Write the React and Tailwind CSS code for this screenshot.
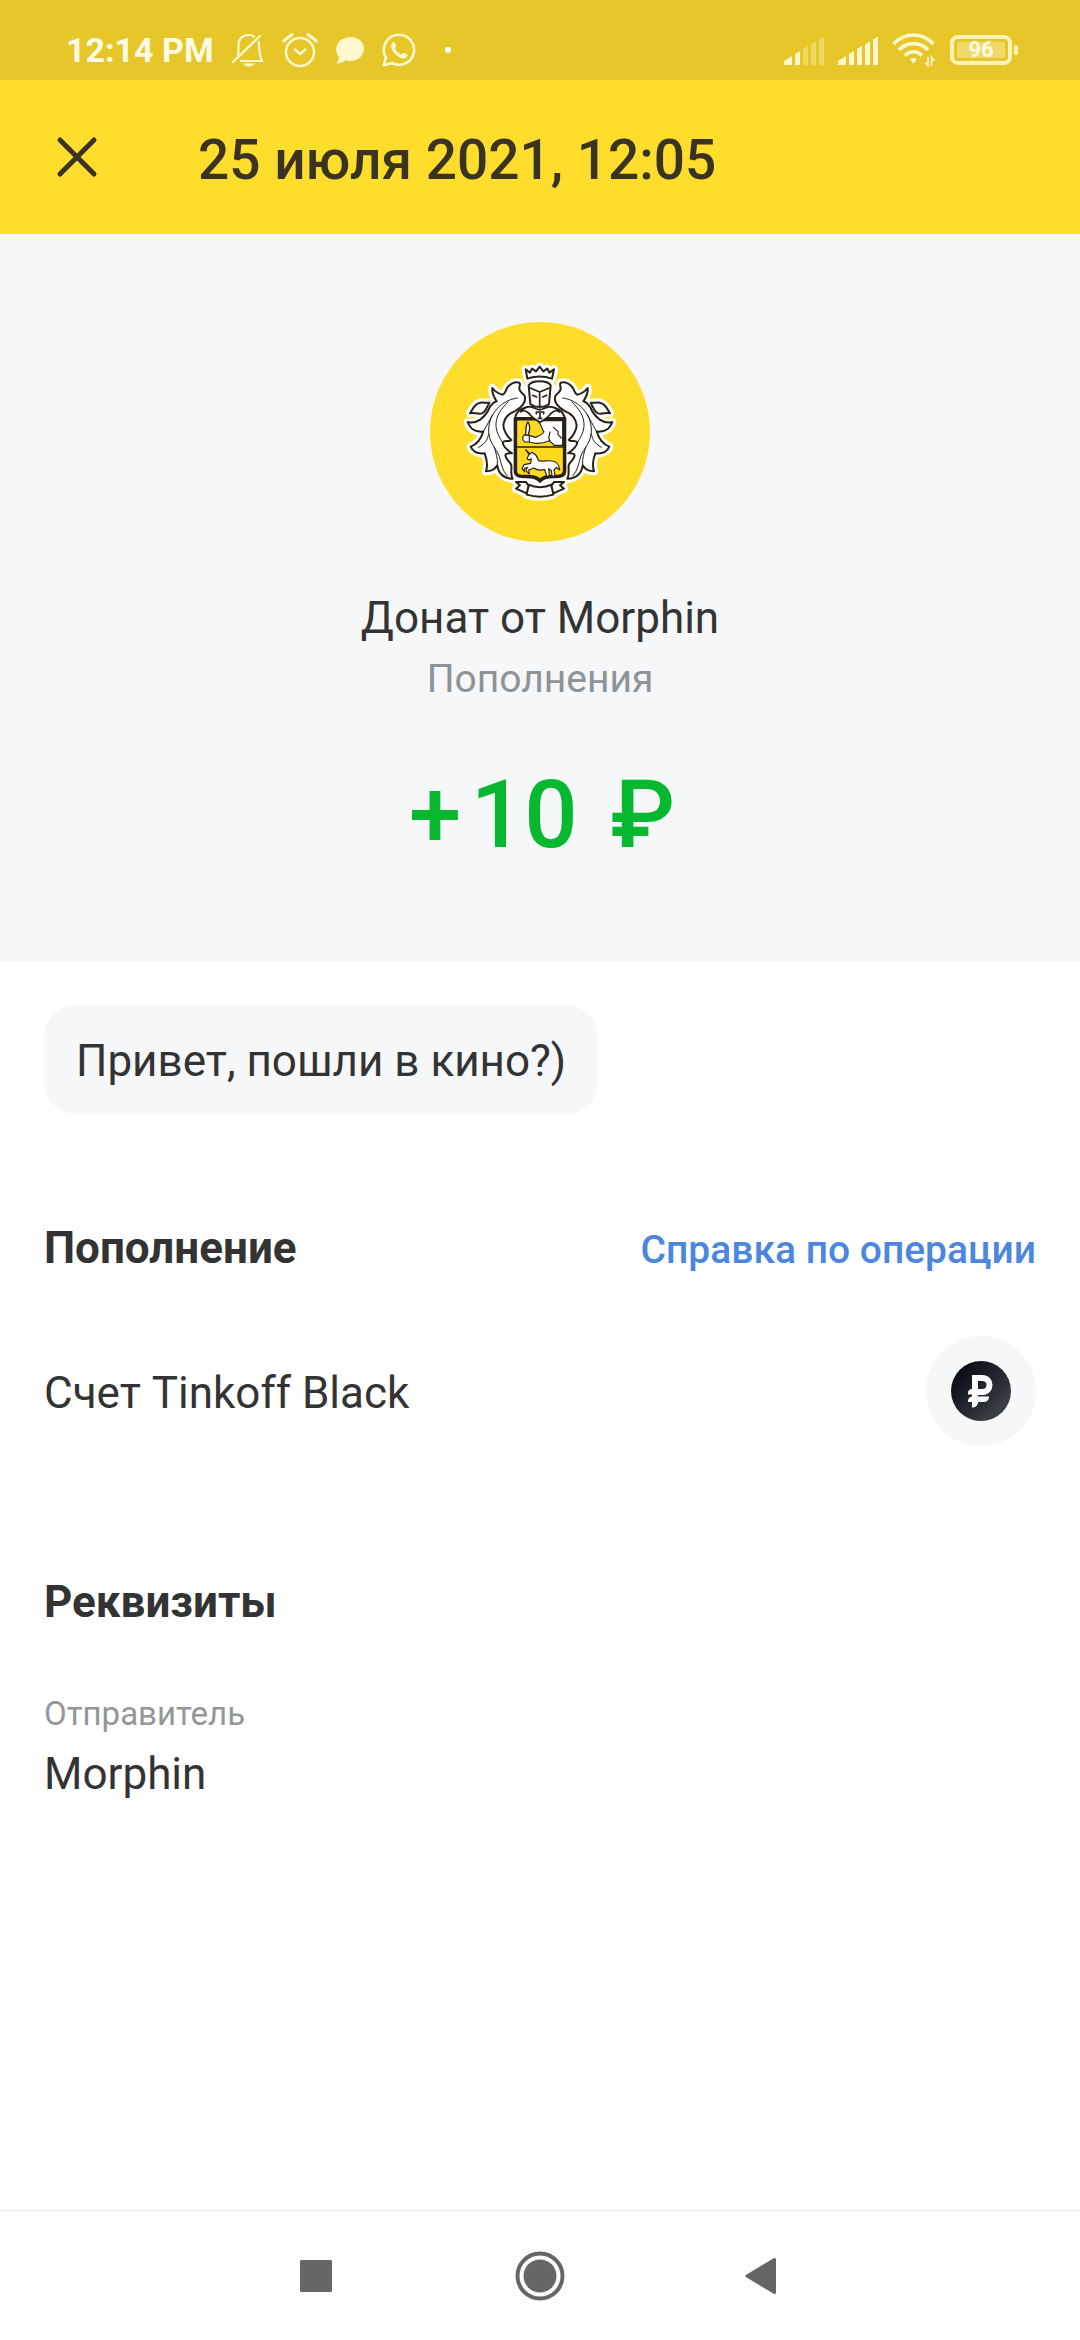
import React from "react";

const CREAM = "#fff8cf";

function BellOff() {
  return (
    <svg viewBox="0 0 34 36" className="h-9 w-[34px]" fill="none" stroke={CREAM} strokeWidth="2.200" strokeLinecap="round">
      <path d="M7 23 C8.500 18 5.500 11 10 6 C13 2.800 19 2 23 4.500 M27.500 10 C28.500 15 27.500 21 31 29 H10" />
      <path d="M2 30 L29 4" />
      <path d="M12.500 31.500 H23.500 C22 35.500 14 35.500 12.500 31.500 Z" fill={CREAM} stroke="none" />
    </svg>
  );
}

function Alarm() {
  return (
    <svg viewBox="0 0 36 36" className="size-9" fill="none" stroke={CREAM} strokeWidth="2.400" strokeLinecap="round" strokeLinejoin="round">
      <circle cx="18" cy="20" r="14" />
      <path d="M1.800 9 L10 2.500 M34.200 9 L26 2.500" strokeWidth="3" />
      <path d="M13 17.500 L18 22 L23.500 17.500" />
    </svg>
  );
}

function Chat() {
  return (
    <svg viewBox="0 0 30 28" className="h-7 w-[30px]" fill={CREAM}>
      <path d="M15.500 1 C23 1 29 6 29 12.500 C29 19.500 23 25 15.500 25 C13.500 25 12 24.800 10.500 24.200 C8 26.500 5 27.500 1.500 27.500 C3 25.500 4 23 3.800 20.800 C2 18.500 1 15.500 1.200 12.500 C1.500 6 8 1 15.500 1 Z" />
    </svg>
  );
}

function Phone() {
  return (
    <svg viewBox="0 0 34 34" className="size-[34px]" fill="none" stroke={CREAM} strokeWidth="2.600" strokeLinejoin="round">
      <path d="M17.500 1.800 A15 15 0 1 1 10 30 L1.800 32.200 L4 24.500 A15 15 0 0 1 17.500 1.800 Z" />
      <path d="M12 9 C13 9 13.500 11 14.300 12.800 C14.500 14 12.800 14.800 13 15.500 C14 18 16.500 20.500 19 21.500 C20 21.800 20.800 19.600 22 19.800 L25.500 21.500 C26 23.500 24 25.500 21.500 25.500 C16 25.500 10 19 9.200 13.800 C9 11 10.500 9 12 9 Z" fill={CREAM} stroke="none" />
    </svg>
  );
}

function Signal({ level }) {
  const bars = [
    "M0 30 V26 L8 21 V30 Z",
    "M11 19 L16 16 V30 H11 Z",
    "M19 14 L24 11 V30 H19 Z",
    "M27 9.500 L32 6.500 V30 H27 Z",
    "M35 4.500 L40 1.500 V30 H35 Z",
  ];
  return (
    <svg viewBox="0 0 40 30" className="h-[30px] w-10" fill={CREAM}>
      {bars.map((d, i) => (
        <path key={d} d={d} opacity={i < level ? 1 : 0.35} />
      ))}
    </svg>
  );
}

function Wifi() {
  return (
    <svg viewBox="0 0 44 34" className="h-[34px] w-11" fill="none" stroke={CREAM} strokeWidth="3.600">
      <path d="M1.500 11 C13 -1 30 -1 41.500 11" />
      <path d="M7 17 C15 8.500 28 8.500 36 17" />
      <path d="M13 22.500 C18 17.500 25 17.500 30 22.500" />
      <path d="M18 26.500 C19.500 24.500 23.500 24.500 25 26.500 L21.500 30.500 Z" fill={CREAM} stroke="none" />
      <path d="M36 24 V33 L33 29.500 M39.500 33 V24 L42.500 28" strokeWidth="1.600" />
    </svg>
  );
}

function Battery() {
  return (
    <div className="flex items-center gap-0.5">
      <div className="flex h-[30px] w-[62px] rounded-lg border-4 border-[#fdf3b8] p-[3px]">
        <span className="flex flex-1 items-center justify-center bg-[#efd968] text-[22px] leading-4 font-bold text-[#fffbe6]">96</span>
      </div>
      <div className="h-2.5 w-1 rounded-sm bg-[#fdf3b8]" />
    </div>
  );
}

function Mantle() {
  return (
    <g>
      <path d="M284 304 C304 294 320 276 314 258 C308 248 296 246 298 234 C299 226 302 222 298 218 C284 214 268 222 260 236 C256 246 254 252 248 254 C238 252 226 246 217 234 C215 250 222 262 230 274 C220 276 214 284 208 294 C202 308 194 318 182 328 C170 336 156 340 143 336 C148 350 158 362 174 364 C182 366 186 366 190 364 C184 386 174 402 152 410 C158 424 174 432 194 430 C200 446 204 466 198 484 C214 484 226 476 232 466 C234 486 248 506 278 506 C270 492 276 480 274 466 C270 452 256 450 256 436 C258 428 268 430 276 430 C264 422 250 412 248 398 C254 388 268 398 274 390 C262 380 250 360 250 346 C252 328 262 312 284 304 Z" />
      <path d="M150 310 C158 298 162 282 180 278 C190 276 198 280 208 278 C202 292 196 306 186 310 C174 314 160 306 150 310 Z" />
      <path d="M292 264 C246 270 206 310 206 360 C206 400 228 412 238 440 C244 460 246 480 262 498 M218 314 C208 330 202 346 190 364 M206 372 C202 388 198 400 176 412 M222 410 C228 428 234 444 232 466 M264 276 C244 296 226 318 228 350 C230 370 240 384 248 398" fill="none" strokeWidth="3" />
    </g>
  );
}

function CrestOutline() {
  return (
    <g>
      <Mantle />
      <g transform="translate(720 0) scale(-1 1)">
        <Mantle />
      </g>
      <path d="M322 206 L317 178 L330 188 L336 176 L348 184 L359 170 L370 184 L382 176 L388 188 L402 178 L396 206 C372 198 346 198 322 206 Z" />
      <path d="M326 226 C336 210 382 210 392 226 L387 282 L359 298 L331 282 Z" />
      <path d="M286 326 C286 306 304 292 331 290 H387 C414 292 432 306 434 326 Z" />
      <path d="M284 324 H436 V484 C436 500 420 502 400 502 C376 502 366 508 360 516 C354 508 344 502 320 502 C300 502 284 500 284 484 Z" />
      <path d="M288 516 L318 516 L326 528 L320 550 L288 536 L300 526 Z M432 516 L402 516 L394 528 L400 550 L432 536 L420 526 Z M326 524 C346 534 374 534 394 524 L400 554 C374 562 346 562 320 554 Z" />
    </g>
  );
}

function Crest() {
  return (
    <svg viewBox="30 36 660 660" className="size-[220px]" role="img" aria-label="Tinkoff" strokeLinejoin="round" strokeLinecap="round">
      <circle cx="360" cy="366" r="330" fill="#ffdd2d" />
      <g fill="#fff" stroke="#fff" strokeWidth="24">
        <path d="M260 280 L320 220 H400 L460 280 V480 H260 Z" stroke="none" />
        <CrestOutline />
      </g>
      <g fill="#fff" stroke="#272117" strokeWidth="6">
        <CrestOutline />
      </g>
      <path d="M288 328 H432 V484 C432 498 416 498 400 498 C376 498 366 502 360 510 C354 502 344 498 320 498 C300 498 288 498 288 484 Z" fill="#ffd91f" stroke="#272117" strokeWidth="7" />
      {/* raised arm with a blade */}
      <path d="M352 332 H428 V406 H402 C400 400 392 398 388 392 C370 400 346 402 328 396 L314 396 C306 390 306 378 314 374 L328 376 L346 382 C358 378 366 374 372 366 C364 358 368 346 352 332 Z" fill="#fff" stroke="#272117" strokeWidth="3.500" />
      <path d="M390 366 L386 384 L390 392 M400 352 L414 364 V374 L424 384" fill="none" stroke="#272117" strokeWidth="3.500" />
      <path d="M316 374 C320 364 314 348 324 336 C330 346 330 362 324 376 Z" fill="#fff" stroke="#272117" strokeWidth="4" />
      <path d="M328 377 V396" stroke="#272117" strokeWidth="3.500" />
      <path d="M290 411 H430" stroke="#272117" strokeWidth="5" />
      {/* unicorn */}
      <path d="M317 419 L330 432 L336 427 L342 431 C350 434 352 444 356 452 C368 456 384 450 396 453 C408 454 418 464 419 480 L409 472 L402 480 L405 498 H396 L394 482 L386 476 L388 498 H380 L374 478 C362 482 350 480 342 474 L326 480 L328 492 L318 482 L322 472 L312 476 L314 486 L306 476 L312 464 L332 460 L334 446 L326 450 L321 446 L327 433 Z" fill="#fff" stroke="#272117" strokeWidth="3.500" />
      <path d="M330 234 L359 246 L388 234 M359 246 V294 M338 256 L350 261 M380 256 L368 261" fill="none" stroke="#272117" strokeWidth="5" />
      {/* collar */}
      <path d="M302 306 C314 296 326 308 334 318 C342 326 350 330 360 337 C370 330 378 326 386 318 C394 308 406 296 418 306 C412 296 400 291 387 290 L359 300 L331 290 C318 291 308 296 302 306 Z" fill="#fff" stroke="#272117" strokeWidth="5" />
      <path d="M349 311 V306 H371 V311 M360 306 V325 M355 325 H365" fill="none" stroke="#272117" strokeWidth="5" />
    </svg>
  );
}

function RubleBadge() {
  return (
    <div className="flex size-[110px] items-center justify-center rounded-full bg-[#f5f7f8]">
      <div className="flex size-[60px] items-center justify-center rounded-full bg-linear-to-br from-[#02060f] to-[#4a4d52]">
        <svg viewBox="0 0 28 34" className="h-[34px] w-7" fill="none" stroke="#fff" strokeWidth="6" role="img" aria-label="RUB">
          <path d="M8 30 V4 H15 C25 4 25 18 15 18 H5" />
          <path d="M1 19.500 C1 16 3 15 6 15 V20.500 H1 Z M1 28 C1 24 3 22.500 6 22.500 H22 C22 26 20 28 16 28 Z M5 26 H11 C11.500 31 9 33.500 5 33.500 Z" fill="#fff" stroke="none" />
        </svg>
      </div>
    </div>
  );
}

export default function App() {
  return (
    <div className="flex min-h-screen flex-col bg-white font-['Roboto',sans-serif] text-[44px] leading-[52px] text-[#333]">
      <div className="flex h-20 items-center justify-between bg-[#e6c629] pt-5 pr-[62px] pl-[66px]">
        <div className="flex items-center gap-[17px]">
          <span className="text-[34px] leading-10 font-bold text-[#fffbe6]">12:14 PM</span>
          <BellOff />
          <Alarm />
          <Chat />
          <Phone />
          <span className="ml-3 size-1.5 rounded-full bg-white" />
        </div>
        <div className="flex items-center gap-3.5">
          <Signal level={2} />
          <Signal level={5} />
          <Wifi />
          <Battery />
        </div>
      </div>

      <header className="flex h-[154px] items-center gap-[98px] bg-[#ffdd2d] px-[54px]">
        <button type="button" aria-label="Закрыть">
          <svg viewBox="0 0 46 46" className="size-[46px]" fill="none" stroke="#3a3322" strokeWidth="5" strokeLinecap="round">
            <path d="M6 6 L40 40 M40 6 L6 40" />
          </svg>
        </button>
        <h1 className="pt-1.5 text-[55px] leading-[64px] font-medium text-[#3a3322]">25 июля 2021, 12:05</h1>
      </header>

      <section className="flex flex-col items-center bg-[#f5f7f8] pt-[88px] pb-[91px]">
        <Crest />
        <h2 className="mt-[50px]">Донат от Morphin</h2>
        <p className="mt-3 text-[39px] leading-[46px] text-[#8e9299]">Пополнения</p>
        <p className="mt-[58px] pl-1 text-[94px] leading-[110px] font-medium text-[#06b82f]">+&#8202;10 &#8202;₽</p>
      </section>

      <main className="flex flex-1 flex-col px-11 pt-11">
        <p className="self-start rounded-4xl bg-[#f5f7f8] px-8 pt-[30px] pb-[27px]">Привет, пошли в кино?)</p>
        <div className="mt-[108px] flex items-baseline justify-between">
          <h3 className="font-bold">Пополнение</h3>
          <a href="#help" className="text-[39px] font-medium text-[#4b87de]">Справка по операции</a>
        </div>
        <div className="mt-[60px] flex items-center justify-between">
          <span className="pt-1">Счет Tinkoff Black</span>
          <RubleBadge />
        </div>
        <h3 className="mt-[130px] font-bold">Реквизиты</h3>
        <dl className="mt-[66px]">
          <dt className="text-[33px] leading-10 text-[#949699]">Отправитель</dt>
          <dd className="mt-3.5">Morphin</dd>
        </dl>
      </main>

      <nav className="flex h-[130px] items-center justify-center border-t border-[#e6e6e6]">
        <button type="button" aria-label="Недавние" className="flex w-56 justify-center">
          <svg viewBox="0 0 50 50" className="size-[50px]" fill="#666"><rect x="9" y="9" width="32" height="32" rx="1.500" /></svg>
        </button>
        <button type="button" aria-label="Домой" className="flex w-56 justify-center">
          <svg viewBox="0 0 50 50" className="size-[50px]" fill="#666">
            <circle cx="25" cy="25" r="22.500" fill="none" stroke="#666" strokeWidth="4" />
            <circle cx="25" cy="25" r="16.500" />
          </svg>
        </button>
        <button type="button" aria-label="Назад" className="flex w-56 justify-center">
          <svg viewBox="0 0 50 50" className="size-[50px]" fill="#666" stroke="#666" strokeWidth="3" strokeLinejoin="round"><path d="M8 25 L35.500 8.500 V41.500 Z" /></svg>
        </button>
      </nav>
    </div>
  );
}
